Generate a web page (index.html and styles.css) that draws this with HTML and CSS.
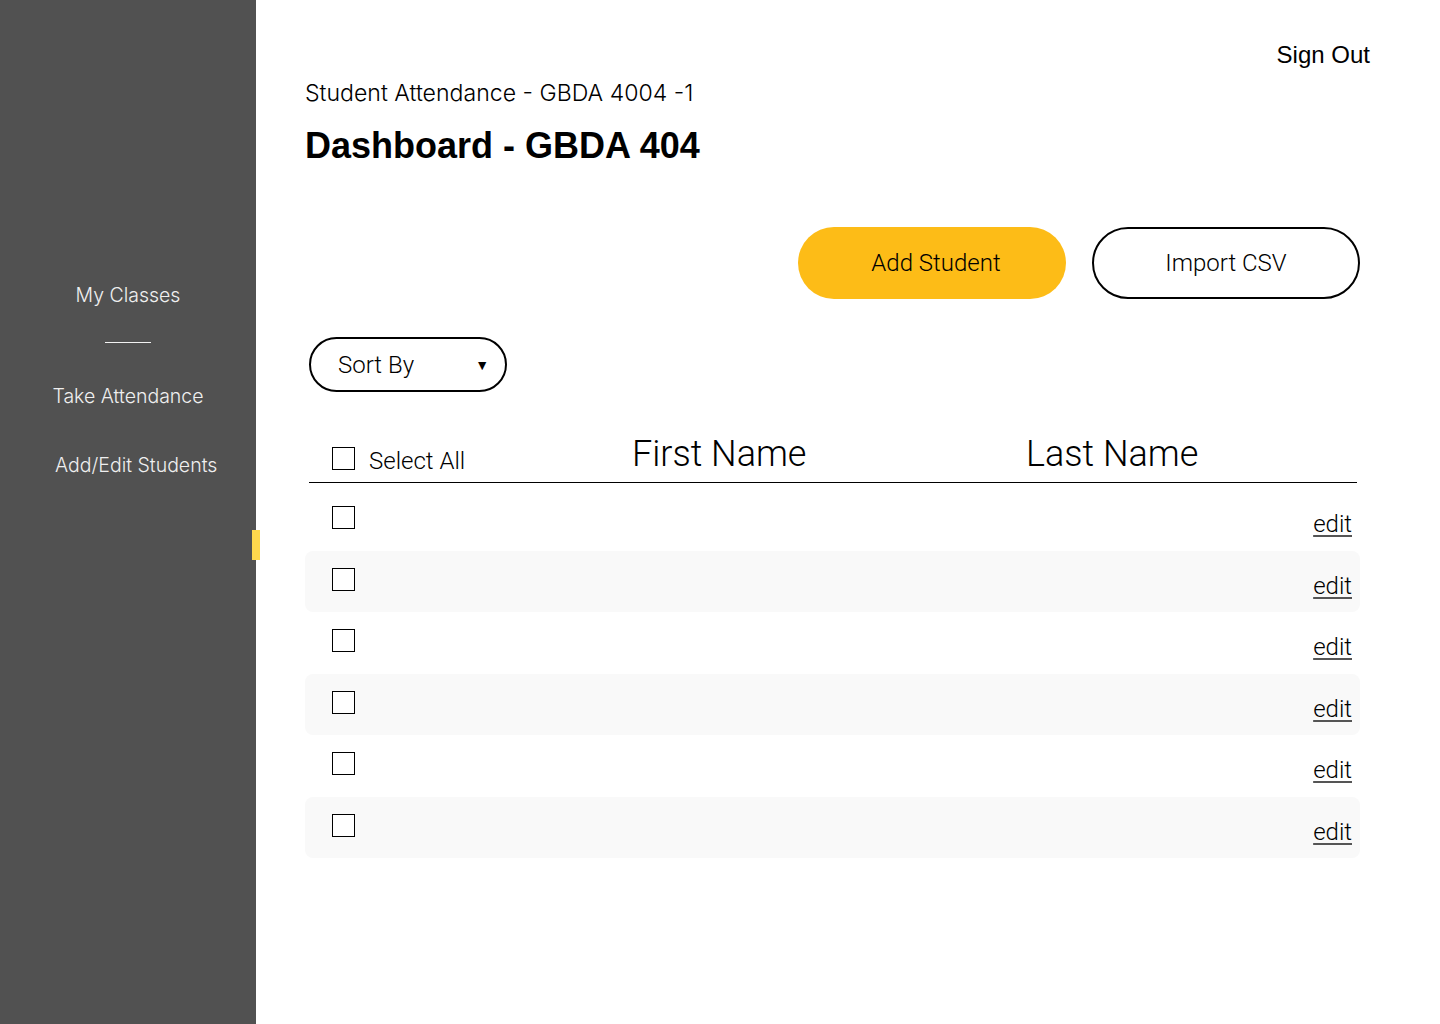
FILE: index.html
```html
<!DOCTYPE html>
<html lang="en">
<head>
<meta charset="utf-8">
<title>Dashboard - GBDA 404</title>
<link rel="stylesheet" href="styles.css">
</head>
<body>
<aside class="sidebar">
  <nav class="nav">
    <a class="nav-item">My Classes</a>
    <span class="nav-divider"></span>
    <a class="nav-item nav-take">Take Attendance</a>
    <a class="nav-item nav-edit">Add/Edit Students</a>
  </nav>
  <span class="sidebar-tab"></span>
</aside>
<main class="main">
  <div class="topbar"><a class="signout">Sign Out</a></div>
  <p class="subtitle">Student Attendance - GBDA 4004 -1</p>
  <h1 class="title">Dashboard - GBDA 404</h1>
  <div class="actions">
    <button class="btn btn-primary">Add Student</button>
    <button class="btn btn-outline">Import CSV</button>
  </div>
  <div class="sort">Sort By <span class="caret">▼</span></div>
  <div class="table-head">
    <div class="select-all"><span class="check"></span><span>Select All</span></div>
    <div class="col-title">First Name</div>
    <div class="col-title">Last Name</div>
  </div>
  <div class="rows">
    <div class="row"><span class="check"></span><a class="edit">edit</a></div>
    <div class="row shaded"><span class="check"></span><a class="edit">edit</a></div>
    <div class="row"><span class="check"></span><a class="edit">edit</a></div>
    <div class="row shaded"><span class="check"></span><a class="edit">edit</a></div>
    <div class="row"><span class="check"></span><a class="edit">edit</a></div>
    <div class="row shaded"><span class="check"></span><a class="edit">edit</a></div>
  </div>
</main>
</body>
</html>
```
FILE: styles.css
```css
html, body {
  margin: 0;
  padding: 0;
  background: #ffffff;
}
body {
  display: flex;
  min-height: 1024px;
  font-family: "Roboto", "Liberation Sans", sans-serif;
  color: #000;
}
.sidebar {
  position: relative;
  width: 256px;
  flex: 0 0 256px;
  background: #515151;
  min-height: 1024px;
}
.nav {
  display: flex;
  flex-direction: column;
  align-items: center;
  padding-top: 283px;
}
.nav-item {
  font-family: "Inter", "Liberation Sans", sans-serif;
  font-weight: 300;
  font-size: 19.5px;
  line-height: 24px;
  color: #efefef;
}
.nav-divider {
  display: block;
  width: 46px;
  height: 1px;
  background: #f2f2f2;
  margin-top: 35px;
}
.nav-take {
  margin-top: 41px;
}
.nav-edit {
  margin-top: 45px;
  align-self: flex-start;
  margin-left: 55px;
}
.sidebar-tab {
  position: absolute;
  right: -4px;
  top: 530px;
  width: 8px;
  height: 30px;
  background: #ffd84d;
}
.main {
  flex: 1;
  padding: 0 80px 0 49px;
}
.topbar {
  display: flex;
  justify-content: flex-end;
  padding-top: 41px;
  margin-right: -10px;
}
.signout {
  font-family: "Liberation Sans", Arial, sans-serif;
  font-size: 24px;
  line-height: 28px;
}
.subtitle {
  margin: 10px 0 0;
  font-family: "Inter", "Liberation Sans", sans-serif;
  font-weight: 300;
  font-size: 23.1px;
  line-height: 28px;
}
.title {
  margin: 18px 0 0;
  font-family: "Liberation Sans", Arial, sans-serif;
  font-weight: 700;
  font-size: 36px;
  line-height: 42px;
}
.actions {
  display: flex;
  justify-content: flex-end;
  gap: 26px;
  margin-top: 60px;
}
.btn {
  width: 268px;
  height: 72px;
  border-radius: 36px;
  font-family: "Roboto", sans-serif;
  font-weight: 300;
  font-size: 24px;
  color: #000;
  box-sizing: border-box;
  padding: 0;
}
.btn-primary {
  background: #fdbc17;
  border: none;
  padding-left: 8px;
}
.btn-outline {
  background: #fff;
  border: 2px solid #000;
}
.sort {
  display: flex;
  align-items: center;
  justify-content: space-between;
  box-sizing: border-box;
  width: 198px;
  height: 55px;
  margin: 38px 0 0 4px;
  padding: 0 16px 0 27px;
  border: 2px solid #000;
  border-radius: 28px;
  font-weight: 300;
  font-size: 24px;
}
.caret {
  font-size: 14px;
}
.table-head {
  display: grid;
  grid-template-columns: 300px 394px 1fr;
  align-items: end;
  margin: 41px 3px 0 4px;
  padding: 0 0 7px 23px;
  border-bottom: 1.5px solid #000;
}
.select-all {
  display: flex;
  align-items: flex-start;
  gap: 14px;
  font-weight: 300;
  font-size: 24px;
  line-height: 28px;
}
.col-title {
  font-weight: 300;
  font-size: 36px;
  line-height: 42px;
}
.check {
  display: block;
  flex: 0 0 auto;
  width: 23px;
  height: 23px;
  box-sizing: border-box;
  border: 1.5px solid #000;
  background: #fff;
}
.rows {
  margin-top: 6px;
}
.row {
  display: flex;
  justify-content: space-between;
  align-items: flex-start;
  height: 61.5px;
  box-sizing: border-box;
  padding: 17px 8px 0 27px;
  border-radius: 8px;
}
.row.shaded {
  background: #f9f9f9;
}
.edit {
  margin-top: 4px;
  font-weight: 300;
  font-size: 24px;
  line-height: 28px;
  text-decoration: underline;
  text-decoration-color: #555;
  text-decoration-thickness: 2px;
  text-underline-offset: 3px;
}
```
